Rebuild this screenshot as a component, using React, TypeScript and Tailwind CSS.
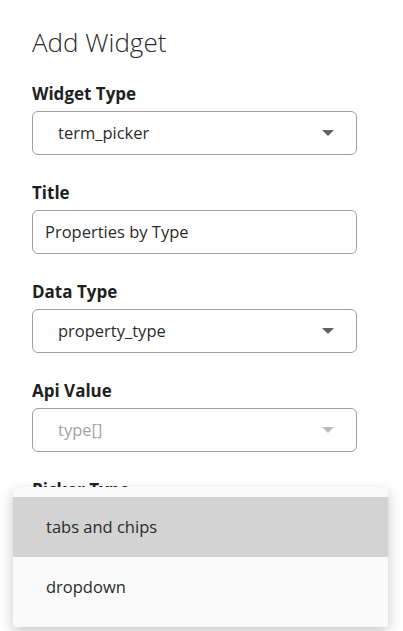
import React from "react";

function Arrow({ disabled }: { disabled?: boolean }) {
  return (
    <svg width="12" height="6" viewBox="0 0 12 6" className="shrink-0">
      <path d="M0 0 L12 0 L6 6 Z" fill={disabled ? "#bdbdbd" : "#616161"} />
    </svg>
  );
}

function Select({ value, disabled }: { value: string; disabled?: boolean }) {
  return (
    <div className="flex h-[44px] w-[325px] items-center justify-between rounded-[6px] border border-[#a0a0a0] bg-white pl-[25px] pr-[22px]">
      <span className={disabled ? "text-[16.5px] text-[#a3a3a3]" : "text-[16.5px] text-[#2b2b2b]"}>{value}</span>
      <Arrow disabled={disabled} />
    </div>
  );
}

function Label({ children }: { children: React.ReactNode }) {
  return <div className="mb-[6px] text-[17px] font-bold leading-[22px] text-[#1f1f1f]">{children}</div>;
}

export default function App() {
  return (
    <div
      className="relative h-[631px] w-[403px] overflow-hidden bg-white"
      style={{ fontFamily: '"Open Sans", sans-serif' }}
    >
      <div className="flex flex-col px-[32px] pt-[26px]">
        <div className="mb-[25px] text-[26px] font-light leading-[32px] text-[#2b2b2b]">Add Widget</div>
        <Label>Widget Type</Label>
        <Select value="term_picker" />
        <div className="h-[27px]" />
        <Label>Title</Label>
        <div className="flex h-[44px] w-[325px] items-center rounded-[6px] border border-[#a0a0a0] bg-white pl-[12px]">
          <span className="text-[16.5px] text-[#2b2b2b]">Properties by Type</span>
        </div>
        <div className="h-[27px]" />
        <Label>Data Type</Label>
        <Select value="property_type" />
        <div className="h-[27px]" />
        <Label>Api Value</Label>
        <Select value="type[]" disabled />
        <div className="h-[27px]" />
        <Label>Picker Type</Label>
      </div>
      <div className="absolute left-[13px] top-[487px] w-[375px] rounded-[3px] bg-[#fafafa] py-[10px] shadow-[0_5px_14px_rgba(0,0,0,0.22)]">
        <div className="flex h-[60px] items-center bg-[#d3d3d3] pl-[33px] text-[16.5px] text-[#2b2b2b]">tabs and chips</div>
        <div className="flex h-[60px] items-center pl-[33px] text-[16.5px] text-[#2b2b2b]">dropdown</div>
      </div>
    </div>
  );
}
